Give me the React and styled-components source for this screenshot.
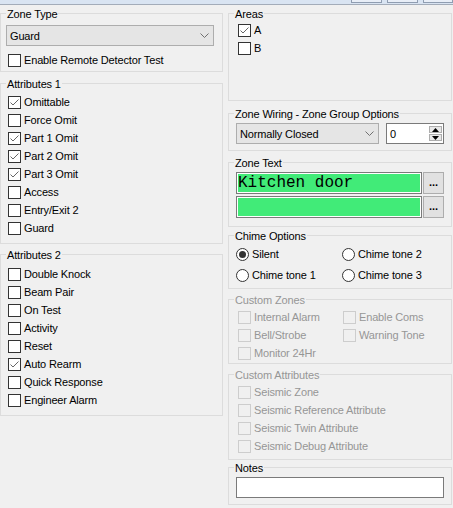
import React from "react";
import styled, { createGlobalStyle } from "styled-components";

const GlobalStyle = createGlobalStyle`
  html, body { margin: 0; padding: 0; background: #f0f0f0; }
  body {
    font-family: "Liberation Sans", Arial, sans-serif;
    font-size: 11px;
    color: #000;
  }
`;

const Window = styled.div`
  width: 453px;
  height: 508px;
  overflow: hidden;
  background: #f0f0f0;
`;

const TopStrip = styled.div`
  height: 4px;
  background: #d9e4f2;
  border-bottom: 1px solid #a3acb9;
  display: flex;
  justify-content: flex-end;
  gap: 5px;
`;

const Stub = styled.div`
  width: ${(p) => p.$w}px;
  height: 2px;
  background: #e8eef7;
  border: 1px solid #8f9db1;
  border-top: none;
`;

const Main = styled.div`
  display: flex;
  gap: 5px;
  padding-top: 8px;
`;

const Column = styled.div`
  width: ${(p) => p.$w}px;
  display: flex;
  flex-direction: column;
`;

const Group = styled.div`
  position: relative;
  box-sizing: border-box;
  height: ${(p) => p.$h}px;
  margin-top: ${(p) => p.$mt || 0}px;
  border: 1px solid #dcdcdc;
  padding: ${(p) => p.$pt}px 7px 0 ${(p) => p.$pl}px;
  display: flex;
  flex-direction: column;
`;

const Title = styled.span`
  position: absolute;
  top: -6px;
  left: 5px;
  padding: 0 1px;
  line-height: 13px;
  background: #f0f0f0;
  color: ${(p) => (p.$disabled ? "#969696" : "#000")};
  letter-spacing: -0.15px;
  white-space: nowrap;
`;

const Combo = styled.div`
  box-sizing: border-box;
  width: ${(p) => p.$w}px;
  height: 21px;
  border: 1px solid #adadad;
  background: #e5e5e5;
  display: flex;
  align-items: center;
  justify-content: space-between;
  padding: 0 4px 0 3px;
  letter-spacing: -0.15px;
`;

const Line = styled.div`
  display: flex;
  align-items: center;
  gap: ${(p) => p.$gap || 0}px;
  margin-top: ${(p) => p.$mt || 0}px;
`;

const Row = styled.label`
  display: flex;
  align-items: center;
  gap: 3px;
  height: 18px;
  margin-left: ${(p) => p.$ml || 0}px;
`;

const Box = styled.span`
  box-sizing: border-box;
  width: 13px;
  height: 13px;
  flex: none;
  border: 1px solid ${(p) => (p.$disabled ? "#cdcdcd" : "#333")};
  background: ${(p) => (p.$disabled ? "transparent" : "#fff")};
  display: flex;
  align-items: center;
  justify-content: center;
`;

const Round = styled(Box)`
  border-radius: 50%;
`;

const Dot = styled.span`
  width: 7px;
  height: 7px;
  border-radius: 50%;
  background: #333;
`;

const Label = styled.span`
  color: ${(p) => (p.$disabled ? "#969696" : "#000")};
  letter-spacing: -0.15px;
  white-space: nowrap;
  line-height: 13px;
`;

const Grid = styled.div`
  display: grid;
  grid-template-columns: ${(p) => p.$col}px 1fr;
  grid-auto-rows: 18px;
  row-gap: ${(p) => p.$rg || 0}px;
`;

const Spin = styled.div`
  box-sizing: border-box;
  width: 58px;
  height: 21px;
  border: 1px solid #7a7a7a;
  background: #fff;
  display: flex;
  align-items: center;
  justify-content: space-between;
  padding: 0 1px 0 3px;
`;

const SpinButtons = styled.div`
  display: flex;
  flex-direction: column;
  gap: 1px;
`;

const SpinBtn = styled.div`
  box-sizing: border-box;
  width: 13px;
  height: 7px;
  border: 1px solid #adadad;
  background: #e8e8e8;
  display: flex;
  align-items: center;
  justify-content: center;
`;

const Lcd = styled.div`
  box-sizing: border-box;
  width: 186px;
  height: 22px;
  border: 1px solid #7a7a7a;
  box-shadow: inset 0 0 0 1px #fff;
  background: #41eb78;
  font-family: "Liberation Mono", "DejaVu Sans Mono", monospace;
  font-size: 16px;
  line-height: 20px;
  padding-left: 1px;
  color: #000;
`;

const DotsBtn = styled.div`
  box-sizing: border-box;
  width: 21px;
  height: 22px;
  border: 1px solid #adadad;
  background: #e1e1e1;
  display: flex;
  align-items: center;
  justify-content: center;
  font-weight: bold;
  font-size: 11px;
  padding-bottom: 2px;
`;

const TextField = styled.div`
  box-sizing: border-box;
  width: 208px;
  height: 21px;
  border: 1px solid #7a7a7a;
  background: #fff;
`;

const Check = () => (
  <svg width="11" height="11" viewBox="0 0 11 11">
    <path d="M1.5 5.5 L4 8 L9.5 2.5" fill="none" stroke="#666" strokeWidth="1" />
  </svg>
);

const Chevron = () => (
  <svg width="9" height="5" viewBox="0 0 9 5">
    <path d="M0.5 0.5 L4.5 4.5 L8.5 0.5" fill="none" stroke="#707070" strokeWidth="1" />
  </svg>
);

const Tri = ({ up }) => (
  <svg width="7" height="4" viewBox="0 0 7 4">
    <path d={up ? "M0 4 L3.5 0 L7 4 Z" : "M0 0 L3.5 4 L7 0 Z"} fill="#000" />
  </svg>
);

const CheckItem = ({ label, checked, disabled, ml }) => (
  <Row $ml={ml}>
    <Box $disabled={disabled}>{checked && <Check />}</Box>
    <Label $disabled={disabled}>{label}</Label>
  </Row>
);

const RadioItem = ({ label, checked }) => (
  <Row>
    <Round>{checked && <Dot />}</Round>
    <Label>{label}</Label>
  </Row>
);

const attrs1 = [
  ["Omittable", true],
  ["Force Omit", false],
  ["Part 1 Omit", true],
  ["Part 2 Omit", true],
  ["Part 3 Omit", true],
  ["Access", false],
  ["Entry/Exit 2", false],
  ["Guard", false],
];

const attrs2 = [
  ["Double Knock", false],
  ["Beam Pair", false],
  ["On Test", false],
  ["Activity", false],
  ["Reset", false],
  ["Auto Rearm", true],
  ["Quick Response", false],
  ["Engineer Alarm", false],
];

export default function App() {
  return (
    <Window>
      <GlobalStyle />
      <TopStrip>
        <Stub $w={29} />
        <Stub $w={29} />
        <Stub $w={28} />
      </TopStrip>
      <Main>
        <Column $w={223}>
          <Group $h={59} $pt={11} $pl={5}>
            <Title>Zone Type</Title>
            <Combo $w={208}>
              <span>Guard</span>
              <Chevron />
            </Combo>
            <Line $mt={5}>
              <CheckItem label="Enable Remote Detector Test" ml={2} />
            </Line>
          </Group>
          <Group $h={161} $mt={11} $pt={9} $pl={7}>
            <Title>Attributes 1</Title>
            {attrs1.map(([l, c]) => (
              <CheckItem key={l} label={l} checked={c} />
            ))}
          </Group>
          <Group $h={162} $mt={10} $pt={10} $pl={7}>
            <Title>Attributes 2</Title>
            {attrs2.map(([l, c]) => (
              <CheckItem key={l} label={l} checked={c} />
            ))}
          </Group>
        </Column>
        <Column $w={224}>
          <Group $h={88} $pt={7} $pl={9}>
            <Title>Areas</Title>
            <CheckItem label="A" checked />
            <CheckItem label="B" />
          </Group>
          <Group $h={38} $mt={12} $pt={9} $pl={7}>
            <Title>Zone Wiring - Zone Group Options</Title>
            <Line $gap={7}>
              <Combo $w={143}>
                <span>Normally Closed</span>
                <Chevron />
              </Combo>
              <Spin>
                <span>0</span>
                <SpinButtons>
                  <SpinBtn>
                    <Tri up />
                  </SpinBtn>
                  <SpinBtn>
                    <Tri />
                  </SpinBtn>
                </SpinButtons>
              </Spin>
            </Line>
          </Group>
          <Group $h={65} $mt={11} $pt={9} $pl={7}>
            <Title>Zone Text</Title>
            <Line $gap={1}>
              <Lcd>Kitchen door</Lcd>
              <DotsBtn>...</DotsBtn>
            </Line>
            <Line $gap={1} $mt={2}>
              <Lcd />
              <DotsBtn>...</DotsBtn>
            </Line>
          </Group>
          <Group $h={54} $mt={8} $pt={9} $pl={7}>
            <Title>Chime Options</Title>
            <Grid $col={106} $rg={3}>
              <RadioItem label="Silent" checked />
              <RadioItem label="Chime tone 2" />
              <RadioItem label="Chime tone 1" />
              <RadioItem label="Chime tone 3" />
            </Grid>
          </Group>
          <Group $h={65} $mt={10} $pt={8} $pl={9}>
            <Title $disabled>Custom Zones</Title>
            <Grid $col={105}>
              <CheckItem label="Internal Alarm" disabled />
              <CheckItem label="Enable Coms" disabled />
              <CheckItem label="Bell/Strobe" disabled />
              <CheckItem label="Warning Tone" disabled />
              <CheckItem label="Monitor 24Hr" disabled />
            </Grid>
          </Group>
          <Group $h={86} $mt={10} $pt={8} $pl={9}>
            <Title $disabled>Custom Attributes</Title>
            <CheckItem label="Seismic Zone" disabled />
            <CheckItem label="Seismic Reference Attribute" disabled />
            <CheckItem label="Seismic Twin Attribute" disabled />
            <CheckItem label="Seismic Debug Attribute" disabled />
          </Group>
          <Group $h={38} $mt={7} $pt={9} $pl={7}>
            <Title>Notes</Title>
            <TextField />
          </Group>
        </Column>
      </Main>
    </Window>
  );
}
